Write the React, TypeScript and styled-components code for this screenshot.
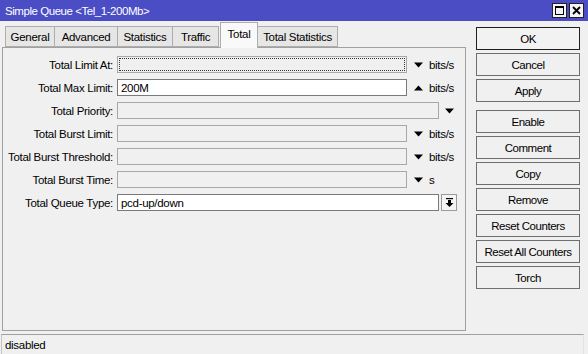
import styled, { createGlobalStyle } from 'styled-components';

const GlobalStyle = createGlobalStyle`
  html, body {
    margin: 0;
    padding: 0;
    background: #f0f0f0;
  }
  body {
    font-family: 'Liberation Sans', Arial, sans-serif;
    font-size: 11.5px;
    letter-spacing: -0.3px;
    color: #000;
  }
`;

const Window = styled.div`
  width: 588px;
  height: 354px;
  display: flex;
  flex-direction: column;
  background: #f0f0f0;
  overflow: hidden;
`;

const TitleBar = styled.div`
  height: 21px;
  flex-shrink: 0;
  background: #4b4dc5;
  display: flex;
  align-items: center;
  padding: 0 4px 0 5px;
`;

const Title = styled.div`
  flex: 1;
  color: #fff;
  font-size: 11.5px;
  letter-spacing: -0.45px;
`;

const TitleButtons = styled.div`
  display: flex;
  gap: 2px;
`;

const TitleButton = styled.div`
  width: 13px;
  height: 13px;
  border: 1px solid #222;
  background: #f4f4f4;
  display: flex;
  align-items: center;
  justify-content: center;
`;

const Main = styled.div`
  flex: 1;
  display: flex;
  min-height: 0;
`;

const LeftSide = styled.div`
  width: 464px;
  margin-left: 2px;
  display: flex;
  flex-direction: column;
  padding-top: 1px;
`;

const TabStrip = styled.div`
  display: flex;
  align-items: flex-end;
  height: 25px;
  padding-left: 3px;
  position: relative;
  z-index: 1;
`;

const Tab = styled.div<{ $active?: boolean; $w: number }>`
  width: ${p => p.$w}px;
  height: ${p => (p.$active ? 26 : 21)}px;
  box-sizing: border-box;
  border: 1px solid #adadad;
  border-bottom: ${p => (p.$active ? 'none' : '1px solid #adadad')};
  background: ${p => (p.$active ? '#f9f9f9' : '#e6e6e6')};
  margin-left: ${p => (p.$active ? 1 : -1)}px;
  margin-bottom: ${p => (p.$active ? -1 : 0)}px;
  display: flex;
  align-items: center;
  justify-content: center;
  padding-bottom: ${p => (p.$active ? 3 : 0)}px;
  &:first-child {
    margin-left: 0;
  }
`;

const Panel = styled.div`
  flex: 1;
  border: 1px solid #a0a0a0;
  background: #f0f0f0;
  padding-top: 8px;
  display: flex;
  flex-direction: column;
  gap: 6px;
`;

const Row = styled.div`
  display: flex;
  align-items: center;
  height: 17px;
`;

const Label = styled.div`
  width: 110px;
  text-align: right;
  margin-right: 4px;
  white-space: nowrap;
`;

const Field = styled.div<{ $wide?: boolean; $enabled?: boolean; $focus?: boolean }>`
  width: ${p => (p.$wide ? 322 : 290)}px;
  height: 17px;
  box-sizing: border-box;
  border: 1px solid ${p => (p.$enabled ? '#7a7a7a' : '#a8a8a8')};
  background: ${p => (p.$enabled ? '#fff' : '#f0f0f0')};
  padding: 1px 3px;
  display: flex;
  align-items: center;
  position: relative;
  &::after {
    content: '';
    display: ${p => (p.$focus ? 'block' : 'none')};
    position: absolute;
    inset: 1px;
    border: 1px dotted #333;
  }
`;

const Trail = styled.div<{ $gap: number }>`
  display: flex;
  align-items: center;
  margin-left: ${p => p.$gap}px;
  gap: 6px;
`;

const DropButton = styled.div`
  width: 16px;
  height: 17px;
  box-sizing: border-box;
  border: 1px solid #9a9a9a;
  background: #f4f4f4;
  margin-left: 2px;
  display: flex;
  align-items: center;
  justify-content: center;
`;

const RightSide = styled.div`
  width: 104px;
  margin-left: 10px;
  padding-top: 6px;
  display: flex;
  flex-direction: column;
  gap: 3px;
`;

const Button = styled.div<{ $default?: boolean; $sep?: boolean }>`
  height: 23px;
  box-sizing: border-box;
  border: 1px solid ${p => (p.$default ? '#1f1f1f' : '#6e6e6e')};
  background: ${p => (p.$default ? '#f2f2f2' : '#f0f0f0')};
  margin-top: ${p => (p.$sep ? 5 : 0)}px;
  display: flex;
  align-items: center;
  justify-content: center;
  font-size: 11.5px;
  letter-spacing: -0.45px;
`;

const StatusBar = styled.div`
  height: 20px;
  flex-shrink: 0;
  margin: 3px 4px 0 1px;
  box-sizing: border-box;
  border-top: 1px solid #a0a0a0;
  border-left: 1px solid #c4c4c4;
  border-right: 1px solid #e2e2e2;
  padding-left: 3px;
  display: flex;
  align-items: center;
`;

const Arrow = ({ up }: { up?: boolean }) => (
  <svg width="9" height="6" viewBox="0 0 9 6">
    <polygon points={up ? '0,5.5 9,5.5 4.5,0.5' : '0,0.5 9,0.5 4.5,5.5'} fill="#000" />
  </svg>
);

const ListIcon = () => (
  <svg width="9" height="9" viewBox="0 0 9 9">
    <rect x="1" y="0" width="7" height="1.2" fill="#000" />
    <rect x="3" y="2" width="3" height="3" fill="#000" />
    <polygon points="0.5,5 8.5,5 4.5,9" fill="#000" />
  </svg>
);

const tabs = [
  { name: 'General', w: 50 },
  { name: 'Advanced', w: 64 },
  { name: 'Statistics', w: 56 },
  { name: 'Traffic', w: 47 },
  { name: 'Total', w: 38, active: true },
  { name: 'Total Statistics', w: 81 },
];

type FieldRow = {
  label: string;
  value?: string;
  enabled?: boolean;
  focus?: boolean;
  kind: 'unit' | 'drop' | 'list';
  up?: boolean;
  unit?: string;
};

const rows: FieldRow[] = [
  { label: 'Total Limit At:', kind: 'unit', unit: 'bits/s', focus: true },
  { label: 'Total Max Limit:', kind: 'unit', unit: 'bits/s', value: '200M', enabled: true, up: true },
  { label: 'Total Priority:', kind: 'drop' },
  { label: 'Total Burst Limit:', kind: 'unit', unit: 'bits/s' },
  { label: 'Total Burst Threshold:', kind: 'unit', unit: 'bits/s' },
  { label: 'Total Burst Time:', kind: 'unit', unit: 's' },
  { label: 'Total Queue Type:', kind: 'list', value: 'pcd-up/down', enabled: true },
];

const buttons = [
  { name: 'OK', def: true },
  { name: 'Cancel' },
  { name: 'Apply' },
  { name: 'Enable', sep: true },
  { name: 'Comment' },
  { name: 'Copy' },
  { name: 'Remove' },
  { name: 'Reset Counters' },
  { name: 'Reset All Counters' },
  { name: 'Torch' },
];

export default function App() {
  return (
    <>
      <GlobalStyle />
      <Window>
        <TitleBar>
          <Title>Simple Queue &lt;Tel_1-200Mb&gt;</Title>
          <TitleButtons>
            <TitleButton>
              <svg width="9" height="9" viewBox="0 0 9 9">
                <rect x="0.5" y="0.5" width="8" height="8" fill="none" stroke="#000" />
                <rect x="0" y="0" width="9" height="2" fill="#000" />
              </svg>
            </TitleButton>
            <TitleButton>
              <svg width="9" height="9" viewBox="0 0 9 9">
                <path d="M1 1 L8 8 M8 1 L1 8" stroke="#000" strokeWidth="1.8" />
              </svg>
            </TitleButton>
          </TitleButtons>
        </TitleBar>
        <Main>
          <LeftSide>
            <TabStrip>
              {tabs.map(t => (
                <Tab key={t.name} $w={t.w} $active={t.active}>
                  {t.name}
                </Tab>
              ))}
            </TabStrip>
            <Panel>
              {rows.map(r => (
                <Row key={r.label}>
                  <Label>{r.label}</Label>
                  <Field $wide={r.kind !== 'unit'} $enabled={r.enabled} $focus={r.focus}>
                    {r.value}
                  </Field>
                  {r.kind === 'unit' && (
                    <Trail $gap={7}>
                      <Arrow up={r.up} />
                      <span>{r.unit}</span>
                    </Trail>
                  )}
                  {r.kind === 'drop' && (
                    <Trail $gap={6}>
                      <Arrow />
                    </Trail>
                  )}
                  {r.kind === 'list' && (
                    <DropButton>
                      <ListIcon />
                    </DropButton>
                  )}
                </Row>
              ))}
            </Panel>
          </LeftSide>
          <RightSide>
            {buttons.map(b => (
              <Button key={b.name} $default={b.def} $sep={b.sep}>
                {b.name}
              </Button>
            ))}
          </RightSide>
        </Main>
        <StatusBar>disabled</StatusBar>
      </Window>
    </>
  );
}
